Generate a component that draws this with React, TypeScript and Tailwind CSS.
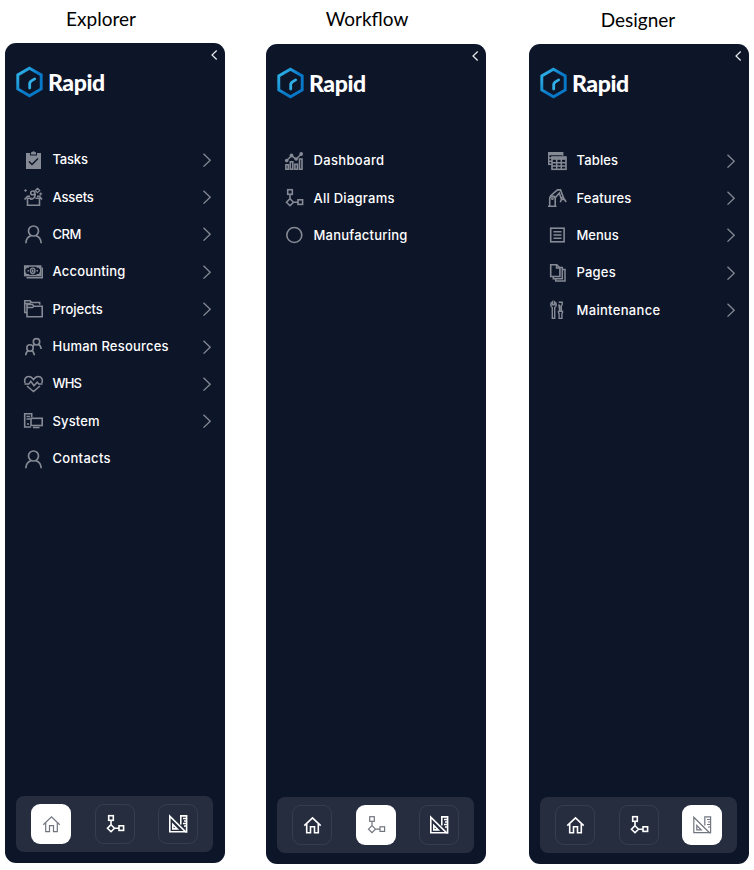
import type { ReactNode } from 'react';

type Glyph = { children: ReactNode; className?: string };

function Icon({ children, className = '' }: Glyph) {
  return (
    <svg
      viewBox="0 0 20 20"
      className={`size-5 shrink-0 ${className}`}
      fill="none"
      stroke="currentColor"
      strokeWidth={1.6}
      strokeLinejoin="miter"
    >
      {children}
    </svg>
  );
}

const TasksIcon = () => (
  <Icon>
    <path d="M3 3h4v2.500h7V3h4v16H3z M8 4.500V2.200h1.100a1.500 1.500 0 0 1 2.800 0H13v2.300z" fill="currentColor" stroke="none" />
    <path d="M6 11.500l3 3 6-6" stroke="#0d1529" strokeWidth={1.500} />
  </Icon>
);

const AssetsIcon = () => (
  <Icon>
    <path d="M4.500 11v7.300h12V11M1.500 12.500l3-3.300h2.500M19 12.500l-2.500-3.300H14M4.500 11.300h4M12.500 11.300h4" />
    <path d="M7 12.300c3.300 0 5.200-1.800 5.200-5 0-2-.8-3.300-2.300-3.300-1.300 0-2.200.9-2.200 2 0 1.100.9 1.800 2 1.800 1.300 0 2.200-.9 2.500-2.300" />
    <path d="M2.500 2.200v2.600M1.200 3.500h2.600M17.700 5.500v3M16.200 7h3" strokeWidth={1.200} />
    <path d="M14.500 1.300l2.200 2.200-2.200 2.200-2.200-2.200z" strokeWidth={1.300} />
  </Icon>
);

const PersonIcon = () => (
  <Icon>
    <circle cx="10.500" cy="7" r="5" strokeWidth={1.700} />
    <path d="M2.800 19.200c.3-4.200 2.500-6.700 5.200-7.500M18.200 19.200c-.3-4.200-2.500-6.700-5.200-7.500" strokeWidth={1.700} />
  </Icon>
);

const MoneyIcon = () => (
  <Icon>
    <rect x="1.700" y="4" width="16" height="9.600" strokeWidth={1.500} />
    <path d="M3.500 15.700h15.800V5.500" strokeWidth={1.600} />
    <ellipse cx="9.700" cy="8.800" rx="2.200" ry="2.700" strokeWidth={1.400} />
    <path d="M9.700 7.500v2.600M4.500 8.800H6M13.500 8.800H15" strokeWidth={1.500} />
    <path d="M2.500 7V4.800h3.500M13.500 4.800H17V7M2.500 10.500v2.300h3.500M13.500 12.800H17v-2.300" strokeWidth={1.800} />
  </Icon>
);

const FoldersIcon = () => (
  <Icon>
    <path d="M4 13.500H1.700V1.800h5.500l1.200 1.700h8.300v2.300M1.700 4.500h5l1.200-1" strokeWidth={1.500} />
    <path d="M4 17.700V5.500h5.500L11 7.200h8.200v10.500zM4 8.500h5.500L11 7.200" />
  </Icon>
);

const PeopleIcon = () => (
  <Icon>
    <circle cx="13.500" cy="4.800" r="3.200" />
    <circle cx="7" cy="11" r="3.200" />
    <path d="M2.700 18.300c.2-2.300 1.300-4 2.900-4.700M11.300 18.300c-.2-2.300-1.300-4-2.900-4.700M11.700 7.300c-.9.500-1.500 1.200-1.900 2M15.200 7.300c1.700.8 2.700 2.300 2.900 4.700" />
  </Icon>
);

const HeartIcon = () => (
  <Icon>
    <path d="M2.100 9C.8 5.400 2.700 2.500 5.600 2.500c2.200 0 3.700 1.200 4.900 3 1.200-1.800 2.700-3 4.900-3 2.900 0 4.800 2.900 3.500 6.500M4 12l6.500 5.500L17 12" />
    <path d="M1.500 10h4.300l2-2.700 3.200 4.500 3.200-3.600 1.500 1.800h3.800" />
  </Icon>
);

const SystemIcon = () => (
  <Icon>
    <path d="M8 16H1.700V2.700h7v3.600M3.500 5.500H7M3.500 8H7M4 13h2" />
    <rect x="8" y="7.300" width="11.200" height="7.200" />
    <path d="M10 16.500h6.500" />
  </Icon>
);

const DashboardIcon = () => (
  <Icon>
    <path d="M1.900 18.300v-4.500h2.400v4.500zM6.300 18.300v-7.500h2.500v7.500zM10.900 18.300v-5h2.500v5zM15.500 18.300V8H18v10.300z" strokeWidth={1.600} />
    <path d="M2.700 9.500l4.800-4.800 4.600 3.500 4.900-5" strokeWidth={1.500} />
    <g fill="currentColor" stroke="none">
      <circle cx="2.700" cy="9.600" r="1.800" />
      <circle cx="7.500" cy="4.500" r="1.900" />
      <circle cx="12.100" cy="8" r="1.800" />
      <circle cx="17.200" cy="3" r="1.900" />
    </g>
  </Icon>
);

const DiagramIcon = ({ className = '', weight = 1.6 }: { className?: string; weight?: number }) => (
  <Icon className={className}>
    <g strokeWidth={weight}>
      <rect x="3.700" y="1.700" width="4.600" height="4.600" />
      <rect x="14" y="11.800" width="4.600" height="4.600" />
      <path d="M6 6.300v4.500M9.300 14.200H14M6 10.700l3.500 3.500L6 17.700l-3.500-3.500z" />
    </g>
  </Icon>
);

const CircleIcon = () => (
  <Icon>
    <circle cx="10.300" cy="10" r="7.500" strokeWidth={1.600} />
  </Icon>
);

const TablesIcon = () => (
  <Icon>
    <path d="M4.500 13.300H1.700V1.800h14v3M1.700 7H5M1.700 10.200H5" strokeWidth={1.400} />
    <path d="M1.700 3h14" strokeWidth={2.500} />
    <rect x="5" y="6" width="14" height="12.300" />
    <path d="M5 7.500h14" strokeWidth={2.600} />
    <path d="M5 11.700h14M5 15h14M9.700 8v10M14.300 8v10" strokeWidth={1.500} />
  </Icon>
);

const RobotIcon = () => (
  <Icon>
    <path d="M1 18.300h8.500M2.700 18V10.500c0-3.200 5.500-3.200 5.500 0V18" />
    <path d="M3.300 8L10.500 1.900h3L17 11M8 10l4.300-5 2.200 6.500M15.300 9l-2 5.300M16.500 10l2.700 4M14 11.500h3" />
    <circle cx="5.400" cy="10.700" r=".6" />
  </Icon>
);

const MenuIcon = () => (
  <Icon>
    <rect x="3.700" y="3.200" width="13.400" height="13.600" />
    <path d="M6.500 6.700h8M6.500 10h8M6.500 13.300h8" />
  </Icon>
);

const PagesIcon = () => (
  <Icon>
    <path d="M3.700 1.700h6l3.200 3.200v8.600H3.700z" />
    <path d="M9.500 2v3h3.300" strokeWidth={1.400} />
    <path d="M6.300 13.500v2.200h9V4.500H13M8.700 15.500V18H18V6.500h-2.500" strokeWidth={1.500} />
  </Icon>
);

const ToolsIcon = () => (
  <Icon>
    <path d="M5.300 18.300V7.500C3.800 6.500 3.500 5 4 3.200l1.500-1.400v3h2v-3L9 3.200c.5 1.800.2 3.300-1.300 4.300v10.800z" strokeWidth={1.400} />
    <path d="M11.800 2.200h3.400v2.300l-.9 1.500v5.300M12.700 11V6l-.9-1.500zM11.500 11.200h4v1.600l-.6.700v4.900h-2.800v-4.900l-.6-.7z" strokeWidth={1.400} />
  </Icon>
);

const HomeIcon = ({ className, weight }: { className: string; weight: number }) => (
  <Icon className={className}>
    <g strokeWidth={weight}>
      <path d="M2.300 10.700L10.500 2.900l8.200 7.800" />
      <path d="M4.700 9v8.700h3.800v-6h4v6h3.800V9" />
    </g>
  </Icon>
);

const DesignIcon = ({ className, weight }: { className: string; weight: number }) => (
  <Icon className={className}>
    <g strokeWidth={weight}>
      <path d="M1.800 2.200v15.500h15.700zM4.800 10.500v4.400h4.400z" />
      <path d="M12.800 10.500V1.900h5.800v15.800H17M15 4.500h3.500M16 7h2.500M15 9.500h3.500M16 12h2.500" />
    </g>
  </Icon>
);

type Entry = { label: string; icon: ReactNode; track: string; leaf?: boolean };

const explorer: Entry[] = [
  { label: 'Tasks', icon: <TasksIcon />, track: 'tracking-[-0.2px]' },
  { label: 'Assets', icon: <AssetsIcon />, track: 'tracking-[-0.15px]' },
  { label: 'CRM', icon: <PersonIcon />, track: 'tracking-[-0.5px]' },
  { label: 'Accounting', icon: <MoneyIcon />, track: 'tracking-[0.18px]' },
  { label: 'Projects', icon: <FoldersIcon />, track: 'tracking-[-0.05px]' },
  { label: 'Human Resources', icon: <PeopleIcon />, track: 'tracking-[0.2px]' },
  { label: 'WHS', icon: <HeartIcon />, track: 'tracking-[-0.8px]' },
  { label: 'System', icon: <SystemIcon />, track: 'tracking-[0.15px]' },
  { label: 'Contacts', icon: <PersonIcon />, track: 'tracking-[0.3px]', leaf: true },
];

const workflow: Entry[] = [
  { label: 'Dashboard', icon: <DashboardIcon />, track: 'tracking-[0.35px]', leaf: true },
  { label: 'All Diagrams', icon: <DiagramIcon />, track: 'tracking-[0.25px]', leaf: true },
  { label: 'Manufacturing', icon: <CircleIcon />, track: 'tracking-[0.23px]', leaf: true },
];

const designer: Entry[] = [
  { label: 'Tables', icon: <TablesIcon />, track: 'tracking-[0.15px]' },
  { label: 'Features', icon: <RobotIcon />, track: 'tracking-[0.12px]' },
  { label: 'Menus', icon: <MenuIcon />, track: 'tracking-normal' },
  { label: 'Pages', icon: <PagesIcon />, track: 'tracking-[0.2px]' },
  { label: 'Maintenance', icon: <ToolsIcon />, track: 'tracking-[0.32px]' },
];

function Logo({ id }: { id: string }) {
  return (
    <div className="flex h-8 items-center gap-[5px] pl-[11px]">
      <svg viewBox="0 0 27 32" className="h-8 w-[27px]" fill="none">
        <defs>
          <linearGradient id={id} x1="0" y1="0" x2="27" y2="20" gradientUnits="userSpaceOnUse">
            <stop offset="0.25" stopColor="#29abe2" />
            <stop offset="0.65" stopColor="#0878c8" />
          </linearGradient>
        </defs>
        <path d="M13.500 2.200l11.700 6.700v14L13.500 29.700 1.800 22.900v-14z" stroke={`url(#${id})`} strokeWidth="2.900" />
        <path d="M13.700 22v-5l1.300-1.900 3.700-2.200" stroke="#30b0e6" strokeWidth="2.800" strokeLinecap="round" strokeLinejoin="round" />
      </svg>
      <span className="font-['Lato'] text-[23px] leading-8 font-black tracking-[-0.4px] text-white">Rapid</span>
    </div>
  );
}

function Tab({ active, children }: { active: boolean; children: ReactNode }) {
  return (
    <button
      className={
        active
          ? 'flex size-10 items-center justify-center rounded-[9px] bg-white'
          : 'flex size-10 items-center justify-center rounded-[9px] border border-[#363d4e]'
      }
    >
      {children}
    </button>
  );
}

function Sidebar({ name, title, entries, active }: { name: string; title: string; entries: Entry[]; active: number }) {
  const tone = (i: number) => (i === active ? 'text-[#70757f]' : 'text-white');
  const weight = (i: number) => (i === active ? 1.2 : 1.6);
  return (
    <section className="flex w-[220px] shrink-0 flex-col">
      <h2 className={`h-[43px] text-center font-['Lato'] text-[19px] leading-6 text-black ${title}`}>{name}</h2>
      <div className="flex h-[820px] flex-col rounded-[11px] bg-[#0d1529]">
        <div className="flex h-[23px] justify-end pt-[6px] pr-[7px]">
          <svg viewBox="0 0 8 12" className="h-3 w-2" fill="none" stroke="#e8ebf0" strokeWidth="1.200">
            <path d="M6.700 1.500L2 6l4.700 4.500" />
          </svg>
        </div>
        <Logo id={`mark-${name}`} />
        <nav className="mt-[43px] flex flex-col">
          {entries.map((e) => (
            <div key={e.label} className="flex h-[37.375px] items-center pr-[13px] pl-[18px] text-[#858a94]">
              {e.icon}
              <span className={`mb-px ml-[9.500px] flex-1 font-['Inter'] text-[13px] leading-5 font-medium whitespace-nowrap text-white ${e.track}`}>
                {e.label}
              </span>
              {!e.leaf && (
                <svg viewBox="0 0 10 14" className="h-[14px] w-[10px]" fill="none" stroke="currentColor" strokeWidth="1.300">
                  <path d="M1.500 .8L8.200 7.200 1.500 13.600" />
                </svg>
              )}
            </div>
          ))}
        </nav>
        <div className="mt-auto mb-[11px] ml-[11px] flex h-14 w-[197px] items-center justify-between rounded-[8px] bg-[#262d3f] px-[15px]">
          <Tab active={active === 0}>
            <HomeIcon className={tone(0)} weight={weight(0)} />
          </Tab>
          <Tab active={active === 1}>
            <DiagramIcon className={tone(1)} weight={weight(1)} />
          </Tab>
          <Tab active={active === 2}>
            <DesignIcon className={tone(2)} weight={weight(2)} />
          </Tab>
        </div>
      </div>
    </section>
  );
}

export default function App() {
  return (
    <main className="flex h-[870px] w-[754px] overflow-hidden bg-white pl-[5px]">
      <Sidebar name="Explorer" title="pt-[7px] pr-[28px]" entries={explorer} active={0} />
      <div className="ml-[41px] pt-px">
        <Sidebar name="Workflow" title="pt-[6px] pr-[18px]" entries={workflow} active={1} />
      </div>
      <div className="ml-[43px] pt-px">
        <Sidebar name="Designer" title="pt-[7px] pr-[2px]" entries={designer} active={2} />
      </div>
    </main>
  );
}
